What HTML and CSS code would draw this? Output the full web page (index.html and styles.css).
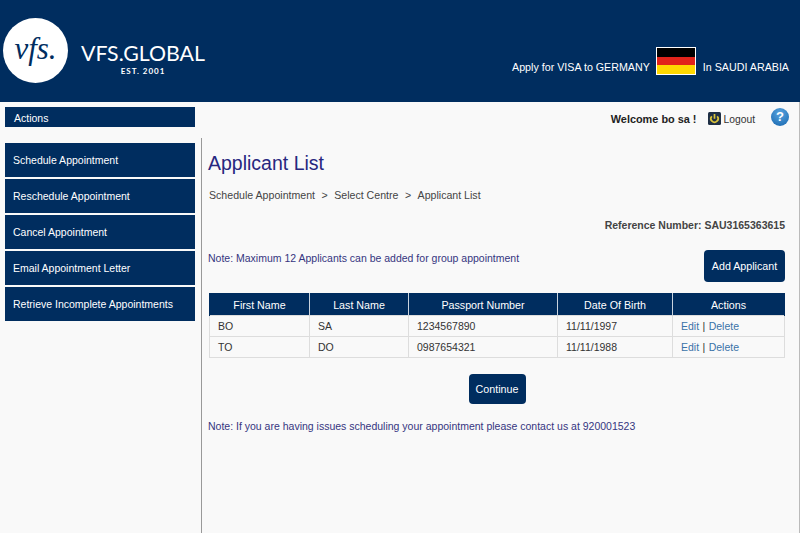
FILE: index.html
```html
<!DOCTYPE html>
<html lang="en">
<head>
    <meta charset="UTF-8">
    <title>Applicant List</title>
    <link rel="stylesheet" href="styles.css">
</head>
<body>
    <header class="header">
        <div class="logo">
            <div class="logo-circle">vfs.</div>
            <div class="logo-text">
                <div class="logo-name">VFS.GLOBAL</div>
                <div class="logo-est">EST. 2001</div>
            </div>
        </div>
        <div class="apply">
            <span>Apply for VISA to GERMANY</span>
            <div class="flag"><i class="black"></i><i class="red"></i><i class="gold"></i></div>
            <span>In SAUDI ARABIA</span>
        </div>
    </header>

    <div class="topbar">
        <div class="actions-title">Actions</div>
        <div class="user">
            <b class="welcome">Welcome bo sa !</b>
            <svg class="logout-icon" width="13" height="13" viewBox="0 0 13 13">
                <rect width="13" height="13" rx="1.5" fill="#1f2f45"/>
                <path d="M3.8 4.2a3.6 3.6 0 1 0 5.4 0" fill="none" stroke="#d8c23a" stroke-width="1.7"/>
                <path d="M6.5 2v4.8" stroke="#d8c23a" stroke-width="1.7"/>
            </svg>
            <span class="logout">Logout</span>
            <div class="help">?</div>
        </div>
    </div>

    <div class="main">
        <nav class="sidebar">
            <a class="menu-item">Schedule Appointment</a>
            <a class="menu-item">Reschedule Appointment</a>
            <a class="menu-item">Cancel Appointment</a>
            <a class="menu-item">Email Appointment Letter</a>
            <a class="menu-item">Retrieve Incomplete Appointments</a>
        </nav>

        <section class="content">
            <h1>Applicant List</h1>
            <div class="crumbs">
                <span>Schedule Appointment</span><span>&gt;</span><span>Select Centre</span><span>&gt;</span><span>Applicant List</span>
            </div>
            <div class="reference">Reference Number: SAU3165363615</div>
            <div class="note-row">
                <p class="note">Note: Maximum 12 Applicants can be added for group appointment</p>
                <button class="btn btn-add">Add Applicant</button>
            </div>
            <table>
                <thead>
                    <tr>
                        <th class="col-first">First Name</th>
                        <th class="col-last">Last Name</th>
                        <th class="col-pass">Passport Number</th>
                        <th class="col-dob">Date Of Birth</th>
                        <th>Actions</th>
                    </tr>
                </thead>
                <tbody>
                    <tr>
                        <td>BO</td>
                        <td>SA</td>
                        <td>1234567890</td>
                        <td>11/11/1997</td>
                        <td class="row-actions"><a>Edit</a> | <a>Delete</a></td>
                    </tr>
                    <tr>
                        <td>TO</td>
                        <td>DO</td>
                        <td>0987654321</td>
                        <td>11/11/1988</td>
                        <td class="row-actions"><a>Edit</a> | <a>Delete</a></td>
                    </tr>
                </tbody>
            </table>
            <div class="continue-row">
                <button class="btn btn-continue">Continue</button>
            </div>
            <p class="note">Note: If you are having issues scheduling your appointment please contact us at 920001523</p>
        </section>
    </div>
</body>
</html>
```

FILE: styles.css
```css
html, body {
    height: 100%;
}

body {
    margin: 0;
    display: flex;
    flex-direction: column;
    overflow: hidden;
    font-family: "Liberation Sans", Arial, sans-serif;
    font-size: 10.5px;
    color: #333;
    background-color: #f9f9f9;
}

.header {
    height: 102px;
    flex: none;
    display: flex;
    justify-content: space-between;
    background-color: #002d5f;
    color: #fff;
}

.logo {
    display: flex;
    padding: 18px 0 0 3px;
}

.logo-circle {
    width: 65px;
    height: 65px;
    border-radius: 50%;
    background-color: #fff;
    color: #002d5f;
    font-family: "Liberation Serif", serif;
    font-style: italic;
    font-size: 31px;
    line-height: 62px;
    text-align: center;
}

.logo-text {
    margin: 24px 0 0 13px;
    text-align: center;
}

.logo-name {
    font-family: Lato, sans-serif;
    font-size: 21.3px;
    line-height: 22px;
}

.logo-est {
    font-family: Lato, sans-serif;
    font-size: 8px;
    font-weight: bold;
    letter-spacing: 1px;
    margin-top: 2px;
}

.apply {
    display: flex;
    align-items: flex-start;
    padding: 47px 11px 0 0;
    font-size: 10.7px;
}

.apply span {
    margin-top: 14px;
}

.flag {
    width: 38px;
    height: 26px;
    margin: 0 7px 0 6px;
    border: 1px solid #fff;
    display: flex;
    flex-direction: column;
}

.flag i {
    flex: 1;
}

.flag .black { background-color: #000; }
.flag .red { background-color: #e2231a; }
.flag .gold { background-color: #ffd800; }

.topbar {
    height: 36px;
    flex: none;
    display: flex;
    justify-content: space-between;
    box-sizing: border-box;
    padding: 5px 10px 0 5px;
    border-right: 1px solid #bbb;
}

.actions-title {
    width: 181px;
    height: 20px;
    padding-left: 9px;
    line-height: 22px;
    background-color: #002d5f;
    color: #fff;
}

.user {
    display: flex;
    align-items: flex-start;
    padding-top: 5px;
}

.welcome {
    color: #222;
    font-size: 10.9px;
    margin-top: 1px;
}

.logout-icon {
    margin: 0 3px 0 11px;
}

.logout {
    font-size: 10.3px;
    margin-top: 2px;
}

.help {
    width: 18px;
    height: 18px;
    margin: -4px 0 0 16px;
    border-radius: 50%;
    background: radial-gradient(circle at 50% 30%, #5aa5e0, #1565ad);
    color: #fff;
    font-weight: bold;
    font-size: 13px;
    line-height: 18px;
    text-align: center;
}

.main {
    flex: 1;
    display: flex;
    border-right: 1px solid #bbb;
}

.sidebar {
    width: 196px;
    flex: none;
    padding: 5px 0 0 5px;
    border-right: 1px solid #999;
}

.menu-item {
    display: block;
    width: 182px;
    height: 34px;
    margin-bottom: 2px;
    padding-left: 8px;
    line-height: 34px;
    background-color: #002d5f;
    color: #fff;
}

.content {
    flex: 1;
    padding: 0 14px 0 7px;
}

h1 {
    margin: 12px 0 0 -1px;
    font-size: 19.5px;
    font-weight: normal;
    line-height: 26px;
    color: #27277f;
}

.crumbs {
    display: flex;
    gap: 6.5px;
    margin-top: 13px;
    font-size: 10.6px;
    color: #444;
    line-height: 13px;
}

.reference {
    margin-top: 17px;
    text-align: right;
    font-weight: bold;
    color: #444;
    line-height: 13px;
}

.note-row {
    display: flex;
    justify-content: space-between;
    margin-top: 18px;
}

.note {
    margin: 0 0 0 -1px;
    line-height: 13px;
    color: #35357f;
}

.note-row .note {
    padding-top: 2px;
}

.btn {
    border: 0;
    border-radius: 4px;
    background-color: #002d5f;
    color: #fff;
    font-family: inherit;
    font-size: 10.7px;
    padding: 0;
}

.btn-add {
    width: 81px;
    height: 32px;
}

.btn-continue {
    width: 57px;
    height: 30px;
}

table {
    width: 100%;
    margin-top: 11px;
    border-collapse: collapse;
    table-layout: fixed;
}

th {
    height: 21px;
    padding: 0;
    background-color: #002d5f;
    color: #fff;
    font-size: 10.7px;
    font-weight: normal;
    border: 1px solid #c9d3de;
    border-top-color: #002d5f;
    border-left-color: #002d5f;
    border-bottom: 0;
}

th:last-child {
    border-right-color: #002d5f;
}

.col-first { width: 99px; }
.col-last { width: 98px; }
.col-pass { width: 148px; }
.col-dob { width: 114px; }

td {
    height: 20px;
    padding: 0 8px;
    border: 1px solid #ddd;
}

td a {
    color: #3a72a8;
}

.row-actions {
    word-spacing: 0.5px;
}

.continue-row {
    display: flex;
    justify-content: center;
    margin: 16px 0 16px;
}
```
